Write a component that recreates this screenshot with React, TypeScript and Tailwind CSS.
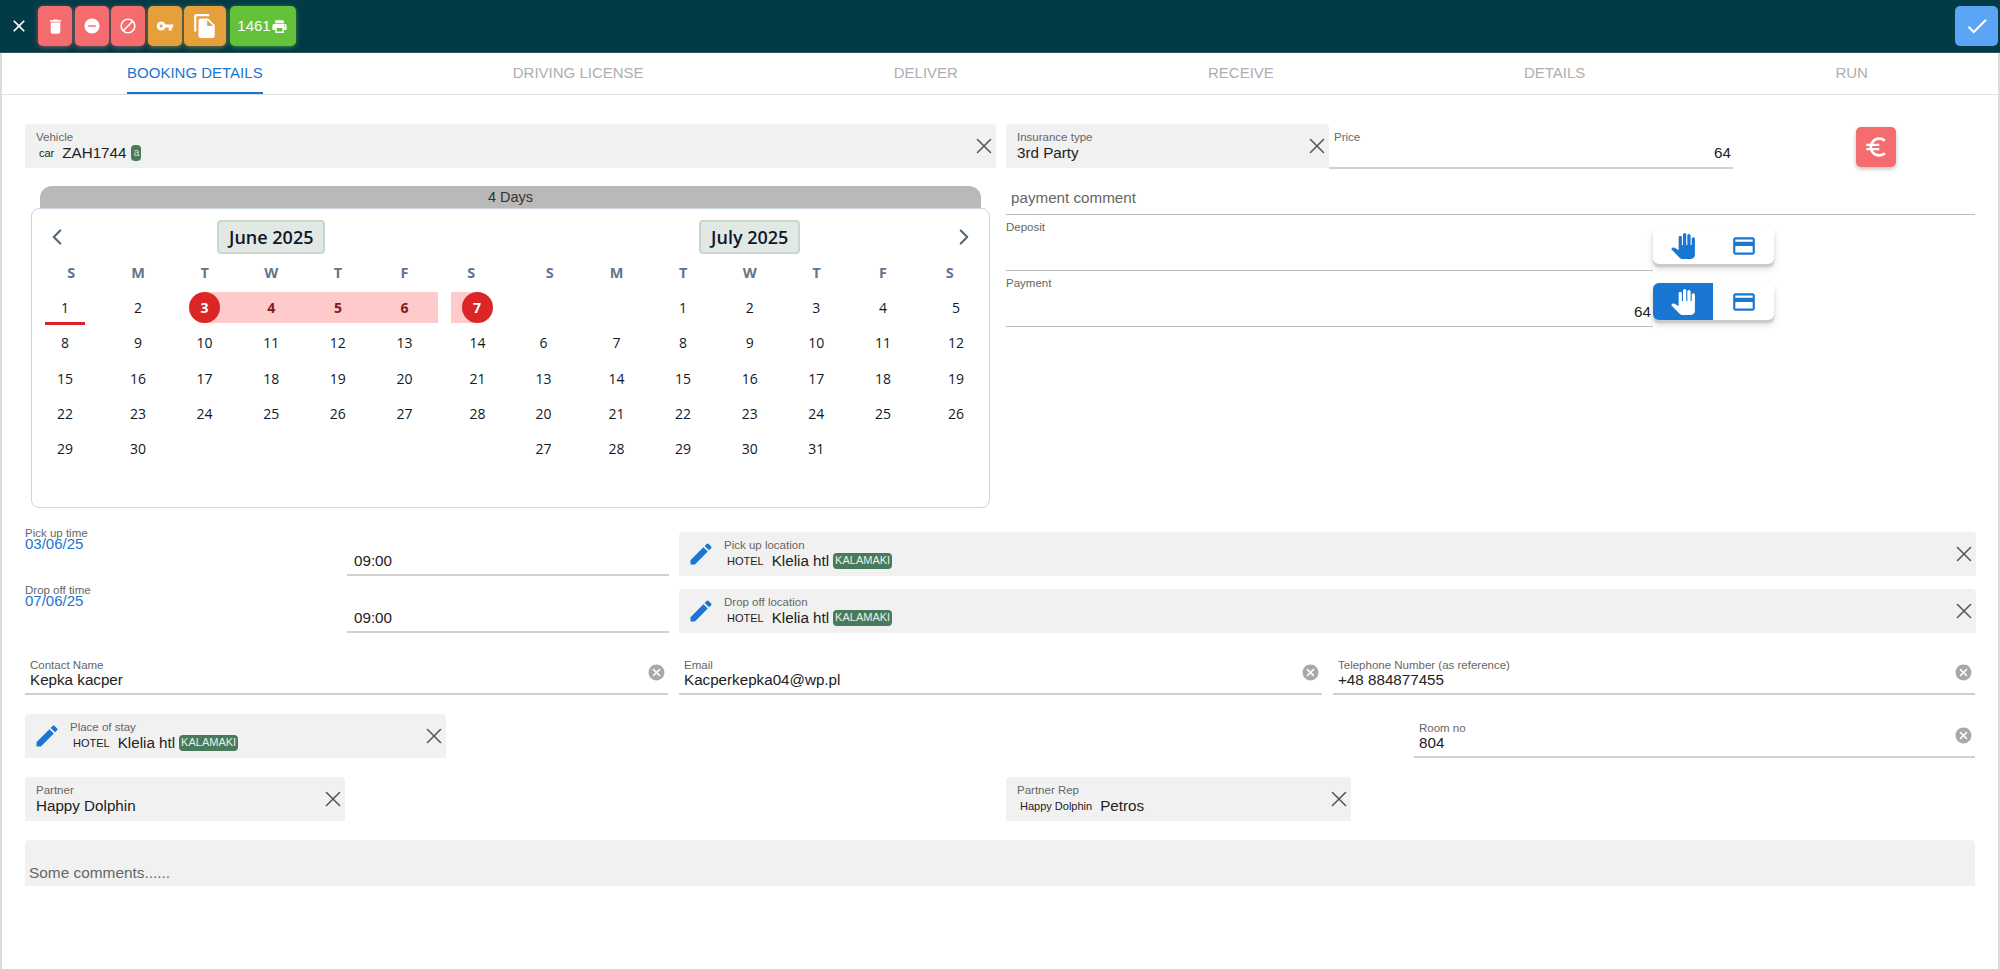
import { ChevronLeft, ChevronRight, X } from 'lucide-react'
import {
  MdBlock,
  MdCancel,
  MdCheck,
  MdClose,
  MdCreditCard,
  MdDelete,
  MdEdit,
  MdEuroSymbol,
  MdFileCopy,
  MdPanTool,
  MdPrint,
  MdRemoveCircle,
  MdVpnKey,
} from 'react-icons/md'

const tabs = ['BOOKING DETAILS', 'DRIVING LICENSE', 'DELIVER', 'RECEIVE', 'DETAILS', 'RUN']
const weekDays = ['S', 'M', 'T', 'W', 'T', 'F', 'S']

const redBtn = 'bg-[#f46c6e] shadow-[0_1px_5px_rgba(244,108,110,0.6)]'
const orangeBtn = 'bg-[#e6a03b] shadow-[0_1px_5px_rgba(230,160,59,0.6)]'

function HeaderButton({ className, children }: { className: string; children: React.ReactNode }) {
  return (
    <button className={`flex h-10 items-center justify-center rounded-[5px] text-white ${className}`}>
      {children}
    </button>
  )
}

function Label({ children }: { children: React.ReactNode }) {
  return <div className="text-[11.5px] leading-[12px] text-[#666]">{children}</div>
}

function ClearX() {
  return <X size={26} strokeWidth={1.5} className="-mr-[1px] shrink-0 text-[#5f5555]" />
}

// value line used by the autocomplete boxes: small prefix, name, optional green badge
function TagValue({ small, main, badge }: { small?: string; main: string; badge?: string }) {
  return (
    <div className="flex h-[19px] items-center text-[15.2px] leading-5 text-[#222]">
      {small && <span className="ml-[3px] mr-2 text-[11px] text-[#222]">{small}</span>}
      <span>{main}</span>
      {badge && (
        <span className="ml-1 flex h-4 items-center rounded-[4px] bg-[#487a5c] px-[2px] text-[11px] leading-none text-[#e8f0ea]">
          {badge}
        </span>
      )}
    </div>
  )
}

function FilledBox({ label, className, children }: { label: string; className: string; children: React.ReactNode }) {
  return (
    <div className={`flex h-11 shrink-0 items-center justify-between rounded-t-[4px] bg-[#f1f1f1] pl-[11px] ${className}`}>
      <div className="self-start pt-[7px]">
        <Label>{label}</Label>
        {children}
      </div>
      <ClearX />
    </div>
  )
}

function LocationBox({ label, className }: { label: string; className: string }) {
  return (
    <div className={`flex h-11 shrink-0 items-center rounded-t-[4px] bg-[#f1f1f1] pl-[8px] ${className}`}>
      <MdEdit size={28} className="shrink-0 text-[#1976d2]" />
      <div className="ml-[9px] flex-1 self-start pt-[7px]">
        <Label>{label}</Label>
        <TagValue small="HOTEL" main="Klelia htl" badge="KALAMAKI" />
      </div>
      <ClearX />
    </div>
  )
}

function TextField({ label, value, className }: { label: string; value: string; className: string }) {
  return (
    <div className={`flex h-[43px] items-center justify-between border-b-2 border-[#d0d0d0] pl-[5px] pr-[2px] ${className}`}>
      <div className="self-start pt-[7px]">
        <Label>{label}</Label>
        <div className="text-[15.2px] leading-[17px] text-[#222]">{value}</div>
      </div>
      <MdCancel size={19} className="text-[#a8a8a8]" />
    </div>
  )
}

function TimeRow({ label, date }: { label: string; date: string }) {
  return (
    <div className="flex h-11 w-[644px] shrink-0">
      <div className="-mt-[5px] w-[322px]">
        <Label>{label}</Label>
        <div className="text-[15px] leading-[10px] text-[#1976d2]">{date}</div>
      </div>
      <div className="flex w-[322px] items-end border-b-2 border-[#d0d0d0] pb-[3px] pl-[7px] text-[15.2px] leading-5 text-[#222]">
        09:00
      </div>
    </div>
  )
}

function PayToggle({ active }: { active?: boolean }) {
  return (
    <div className="mt-3 flex h-[37px] w-[121px] shrink-0 overflow-hidden rounded-md bg-white shadow-[0_3px_0_#cbcbcb,0_4px_6px_rgba(0,0,0,0.2)]">
      <div className={`flex w-[60px] items-center justify-center ${active ? 'bg-[#1976d2] text-white' : 'text-[#1976d2]'}`}>
        <MdPanTool size={26} />
      </div>
      <div className="flex w-[61px] items-center justify-center text-[#1976d2]">
        <MdCreditCard size={26} />
      </div>
    </div>
  )
}

function DayCell({ day, col, first }: { day: number; col: number; first?: boolean }) {
  const align = col === 0 ? 'justify-start pl-[7px]' : col === 6 ? 'justify-end pr-[7px]' : 'justify-center'

  if (first && day === 1) {
    return (
      <div className={`flex h-[35.3px] items-center ${align}`}>
        <span className="flex h-[34px] w-10 items-center justify-center border-b-[3px] border-[#dc2626] pt-[3px] text-[14px] text-[#111827]">
          {day}
        </span>
      </div>
    )
  }
  if (first && day === 3) {
    return (
      <div className="flex h-[35.3px] items-center">
        <div className="flex h-[31px] w-full items-center justify-center bg-[linear-gradient(to_right,transparent_50%,#fecaca_50%)]">
          <span className="flex size-[31px] items-center justify-center rounded-full bg-[#dc2626] text-[14px] font-bold text-white">3</span>
        </div>
      </div>
    )
  }
  if (first && day >= 4 && day <= 6) {
    return (
      <div className="flex h-[35.3px] items-center">
        <div className="flex h-[31px] w-full items-center justify-center bg-[#fecaca] text-[14px] font-bold text-[#7f1d1d]">{day}</div>
      </div>
    )
  }
  if (first && day === 7) {
    return (
      <div className="flex h-[35.3px] items-center">
        <div className="flex h-[31px] w-full items-center justify-end bg-[linear-gradient(to_right,transparent_13px,#fecaca_13px,#fecaca_40px,transparent_40px)] pr-[12px]">
          <span className="flex size-[31px] items-center justify-center rounded-full bg-[#dc2626] text-[14px] font-bold text-white">7</span>
        </div>
      </div>
    )
  }
  return (
    <div className={`flex h-[35.3px] items-center ${align}`}>
      <span className="w-10 text-center text-[14px] text-[#111827]">{day}</span>
    </div>
  )
}

function Month({ title, days, offset, first }: { title: string; days: number; offset: number; first?: boolean }) {
  const cells = Array.from({ length: days + offset }, (_, i) => (i < offset ? 0 : i - offset + 1))
  return (
    <div className="w-[466.5px] shrink-0">
      <div className="grid h-[34px] grid-cols-[1fr_auto_1fr] items-center">
        <div className="pl-[6px] text-[#56677c]">{first && <ChevronLeft size={26} />}</div>
        <button className="flex h-[34px] items-center rounded-[4px] border-2 border-[#cbd5d1] bg-[#e2e8e4] px-[10px] text-[18px] font-semibold text-[#0f172a]">
          {title}
        </button>
        <div className="flex justify-end pr-[6px] text-[#56677c]">{!first && <ChevronRight size={26} />}</div>
      </div>
      <div className="grid grid-cols-7">
        {weekDays.map((d, i) => (
          <div key={i} className="flex h-9 items-center justify-center pt-[2px] text-[14.5px] font-bold text-[#64748b]">
            {d}
          </div>
        ))}
        {cells.map((day, i) =>
          day === 0 ? <div key={i} /> : <DayCell key={i} day={day} col={i % 7} first={first} />,
        )}
      </div>
    </div>
  )
}

export default function App() {
  return (
    <div className="flex min-h-screen flex-col bg-white font-['Liberation_Sans',Arial,sans-serif]">
      {/* Top bar */}
      <header className="flex h-[53px] items-center border-b border-[#2c5560] bg-[#023a46] pr-[2px]">
        <div className="flex w-[38px] justify-center text-white">
          <MdClose size={20} />
        </div>
        <div className="flex gap-[2.5px]">
          <HeaderButton className={`w-[34px] ${redBtn}`}><MdDelete size={19} /></HeaderButton>
          <HeaderButton className={`w-[34px] ${redBtn}`}><MdRemoveCircle size={18} /></HeaderButton>
          <HeaderButton className={`w-[34px] ${redBtn}`}><MdBlock size={18} /></HeaderButton>
          <HeaderButton className={`w-[34px] ${orangeBtn}`}><MdVpnKey size={18} /></HeaderButton>
          <HeaderButton className={`w-[42px] ${orangeBtn}`}><MdFileCopy size={26} /></HeaderButton>
          <HeaderButton className="ml-[1px] w-[66px] bg-[#64c23a] text-[15px] shadow-[0_1px_5px_rgba(100,194,58,0.6)]">
            1461<MdPrint size={17} />
          </HeaderButton>
        </div>
        <button className="ml-auto flex h-10 w-[43px] items-center justify-center rounded-[5px] bg-[#5aa5f5] text-white">
          <MdCheck size={26} />
        </button>
      </header>

      <div className="flex flex-1 flex-col border-x-2 border-[#dcdcd6]">
        {/* Tabs */}
        <nav className="flex h-[42px] shrink-0 justify-around border-b border-[#e0e0e0] pr-[5px]">
          {tabs.map((t, i) => (
            <div
              key={t}
              className={`flex h-[41px] items-center border-b-2 pt-[1px] text-[15px] ${
                i === 0 ? 'border-[#1976d2] text-[#1976d2]' : 'border-transparent text-[#aeaeae]'
              }`}
            >
              {t}
            </div>
          ))}
        </nav>

        <main className="pl-[23px] pr-[23px] pt-[29px]">
          <div className="flex gap-[10px]">
            {/* Vehicle and calendar */}
            <div className="w-[971px] shrink-0">
              <FilledBox label="Vehicle" className="w-full">
                <div className="flex h-[19px] items-center text-[15.2px] leading-5 text-[#222]">
                  <span className="ml-[3px] mr-2 text-[11px] text-[#222]">car</span>
                  <span>ZAH1744</span>
                  <span className="ml-[5px] flex h-4 w-[10px] items-center justify-center rounded-[4px] bg-[#487a5c] text-[10px] leading-none text-[#d8e4dc]">a</span>
                </div>
              </FilledBox>
              <div className="mx-[15px] mt-[18px] flex h-6 items-center justify-center rounded-t-xl bg-[#b9b9b9] text-[14.5px] text-[#333]">
                4 Days
              </div>
              <div className="relative ml-[6px] -mt-[2px] flex h-[300px] w-[959px] gap-[12px] rounded-lg border border-[#cbd5e1] bg-white px-[6px] pt-[11px] font-['Open_Sans',sans-serif]">
                <Month title="June 2025" days={30} offset={0} first />
                <Month title="July 2025" days={31} offset={2} />
              </div>
            </div>

            {/* Price and payments */}
            <div className="min-w-0 flex-1">
              <div className="flex items-start">
                <FilledBox label="Insurance type" className="w-[323px]">
                  <TagValue main="3rd Party" />
                </FilledBox>
                <div className="h-[45px] w-[404px] shrink-0 border-b-2 border-[#d0d0d0] pl-[5px] pr-[2px] pt-[7px]">
                  <Label>Price</Label>
                  <div className="text-right text-[15.2px] leading-5 text-[#222]">64</div>
                </div>
                <button className="ml-[123px] mt-[3px] flex size-10 items-center justify-center rounded-[5px] bg-[#f46c6e] text-white shadow-[0_2px_4px_rgba(0,0,0,0.25)]">
                  <MdEuroSymbol size={26} />
                </button>
              </div>
              <div className="flex h-[46px] items-end border-b border-[#bdbdbd] pb-[6px] pl-[5px] text-[15.2px] leading-5 text-[#666]">
                payment comment
              </div>
              <div className="flex">
                <div className="h-[56px] w-[647px] shrink-0 border-b border-[#bdbdbd] pt-[6px]">
                  <Label>Deposit</Label>
                </div>
                <PayToggle />
              </div>
              <div className="flex">
                <div className="flex h-[56px] w-[647px] shrink-0 flex-col justify-between border-b border-[#bdbdbd] pb-[4px] pr-[2px] pt-[6px]">
                  <Label>Payment</Label>
                  <div className="text-right text-[15.2px] leading-5 text-[#222]">64</div>
                </div>
                <PayToggle active />
              </div>
            </div>
          </div>

          {/* Times and locations */}
          <div className="mt-[24px] flex gap-[10px]">
            <TimeRow label="Pick up time" date="03/06/25" />
            <LocationBox label="Pick up location" className="w-[1297px]" />
          </div>
          <div className="mt-[13px] flex gap-[10px]">
            <TimeRow label="Drop off time" date="07/06/25" />
            <LocationBox label="Drop off location" className="w-[1297px]" />
          </div>

          {/* Contact */}
          <div className="mt-[19px] flex gap-[11px]">
            <TextField label="Contact Name" value="Kepka kacper" className="w-[643px]" />
            <TextField label="Email" value="Kacperkepka04@wp.pl" className="w-[643px]" />
            <TextField label="Telephone Number (as reference)" value="+48 884877455" className="flex-1" />
          </div>

          <div className="mt-[19px] flex items-start justify-between">
            <LocationBox label="Place of stay" className="w-[421px]" />
            <TextField label="Room no" value="804" className="mt-[1px] w-[561px]" />
          </div>

          <div className="mt-[19px] flex gap-[661px]">
            <FilledBox label="Partner" className="w-[320px]">
              <TagValue main="Happy Dolphin" />
            </FilledBox>
            <FilledBox label="Partner Rep" className="w-[345px]">
              <TagValue small="Happy Dolphin" main="Petros" />
            </FilledBox>
          </div>

          <div className="mt-[19px] flex h-[46px] items-end rounded-t-[4px] bg-[#f1f1f1] pb-[3px] pl-[4px] text-[15.4px] leading-5 text-[#666]">
            Some comments......
          </div>
        </main>
      </div>
    </div>
  )
}
